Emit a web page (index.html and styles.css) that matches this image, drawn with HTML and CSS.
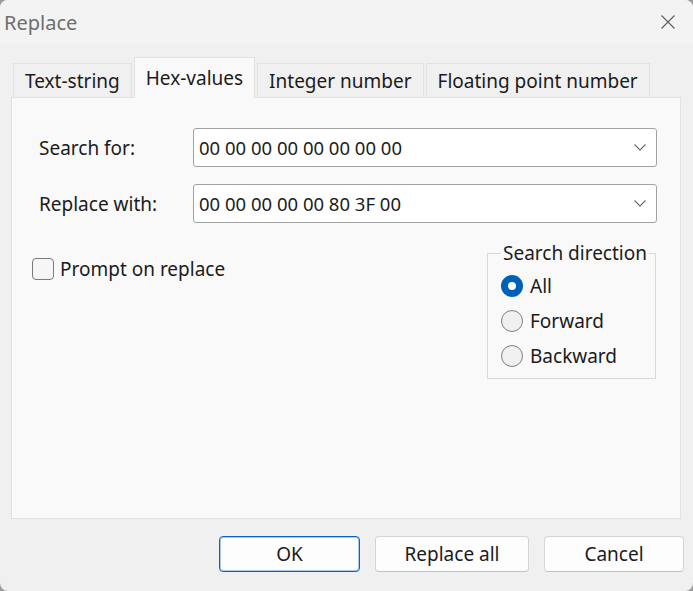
FILE: index.html
```html
<!DOCTYPE html>
<html>
<head>
  <meta charset="UTF-8">
  <title>Replace</title>
  <link rel="stylesheet" href="styles.css">
</head>
<body>
  <div class="window">
    <div class="titlebar">
      <span class="titlebar__title">Replace</span>
      <svg class="titlebar__close" width="16" height="16" viewBox="0 0 16 16">
        <path d="M1.5 1.5 L14.5 14.5 M14.5 1.5 L1.5 14.5" stroke="#5c5c5c" stroke-width="1.1" fill="none"/>
      </svg>
    </div>

    <div class="dialog">
      <div class="tabs">
        <div class="tab">Text-string</div>
        <div class="tab tab--active">Hex-values</div>
        <div class="tab">Integer number</div>
        <div class="tab">Floating point number</div>
      </div>

      <div class="panel">
        <div class="field">
          <label class="field__label">Search for:</label>
          <div class="combo">
            <span class="combo__value">00 00 00 00 00 00 00 00</span>
            <svg class="combo__arrow" width="12" height="7" viewBox="0 0 12 7">
              <path d="M0.5 0.5 L6 6 L11.5 0.5" stroke="#6a6a6a" stroke-width="1.1" fill="none"/>
            </svg>
          </div>
        </div>
        <div class="field">
          <label class="field__label">Replace with:</label>
          <div class="combo">
            <span class="combo__value">00 00 00 00 00 80 3F 00</span>
            <svg class="combo__arrow" width="12" height="7" viewBox="0 0 12 7">
              <path d="M0.5 0.5 L6 6 L11.5 0.5" stroke="#6a6a6a" stroke-width="1.1" fill="none"/>
            </svg>
          </div>
        </div>

        <div class="options">
          <label class="check"><span class="check__box"></span>Prompt on replace</label>

          <fieldset class="group">
            <legend class="group__title">Search direction</legend>
            <label class="radio"><span class="radio__circle radio__circle--on"></span>All</label>
            <label class="radio"><span class="radio__circle"></span>Forward</label>
            <label class="radio"><span class="radio__circle"></span>Backward</label>
          </fieldset>
        </div>
      </div>

      <div class="buttons">
        <button class="btn btn--default btn--ok">OK</button>
        <button class="btn btn--replace">Replace all</button>
        <button class="btn btn--cancel">Cancel</button>
      </div>
    </div>
  </div>
</body>
</html>
```

FILE: styles.css
```css
/* Replace dialog */
html {
  background-color: #9c9c9c;
}

body {
  margin: 0;
  font-family: "Noto Sans", "Open Sans", sans-serif;
  font-size: 19px;
  color: #1b1b1b;
}

.window {
  width: 693px;
  height: 591px;
  background-color: #f0f0f0;
  border-radius: 8px;
  overflow: hidden;
}

.titlebar {
  height: 44px;
  padding: 0 17px 0 4px;
  display: flex;
  align-items: center;
  justify-content: space-between;
  background-color: #f3f3f3;
}

.titlebar__title {
  font-size: 20px;
  color: #6e6e6e;
}

.dialog {
  padding: 13px 0 0 11px;
}

/* Tabs */
.tabs {
  display: flex;
  align-items: flex-end;
  gap: 2px;
  padding-left: 2px;
  margin-bottom: -1px;
  position: relative;
  z-index: 1;
}

.tab {
  height: 34px;
  padding: 0 11px;
  display: flex;
  align-items: center;
  border: 1px solid #e2e2e2;
  border-bottom: none;
  margin-bottom: 1px;
  background-color: #f0f0f0;
  box-sizing: border-box;
}

.tab--active {
  height: 41px;
  margin-bottom: 0;
  background-color: #f9f9f9;
}

.panel {
  width: 670px;
  height: 422px;
  padding: 30px 23px 0 20px;
  border: 1px solid #e2e2e2;
  background-color: #f9f9f9;
  box-sizing: border-box;
}

/* Form rows */
.field {
  display: flex;
  align-items: center;
  padding-left: 7px;
  margin-bottom: 17px;
}

.field__label {
  width: 154px;
  flex-shrink: 0;
}

.combo {
  flex: 1;
  height: 39px;
  padding: 0 10px 0 5px;
  display: flex;
  align-items: center;
  justify-content: space-between;
  background-color: #fff;
  border: 1px solid #a2a2a2;
  border-radius: 3px;
  box-sizing: border-box;
}

.combo__value {
  font-size: 18.5px;
}

.options {
  display: flex;
  justify-content: space-between;
  align-items: flex-start;
  margin-top: 18px;
}

.check {
  display: flex;
  align-items: center;
  gap: 6px;
  margin-top: 17px;
  line-height: 22px;
}

.check__box {
  width: 22px;
  height: 22px;
  border: 1px solid #7a7a7a;
  border-radius: 4px;
  background-color: #f6f6f6;
  box-sizing: border-box;
}

/* Group box */
.group {
  width: 169px;
  margin: 0 1px 0 0;
  padding: 3px 0 5px 13px;
  border: 1px solid #d9d9d9;
  box-sizing: border-box;
}

.group__title {
  padding: 0 2px;
  line-height: 24px;
  white-space: nowrap;
}

.radio {
  height: 35px;
  display: flex;
  align-items: center;
  gap: 7px;
}

.radio__circle {
  width: 22px;
  height: 22px;
  border: 1px solid #7f7f7f;
  border-radius: 50%;
  background-color: #f0f0f0;
  box-sizing: border-box;
}

.radio__circle--on {
  border: 7px solid #005fb8;
  background-color: #fff;
}

/* Buttons */
.buttons {
  display: flex;
  justify-content: flex-end;
  gap: 15px;
  margin-top: 17px;
  padding-right: 9px;
}

.btn {
  height: 36px;
  font-family: inherit;
  font-size: 19px;
  color: #1b1b1b;
  background-color: #fdfdfd;
  border: 1px solid #d4d4d4;
  border-bottom-color: #c2c2c2;
  border-radius: 4px;
}

.btn--default {
  border: 1px solid #0a64bd;
  box-shadow: inset 0 0 0 1px rgba(10, 100, 189, 0.35);
}

.btn--ok {
  width: 141px;
}

.btn--replace {
  width: 154px;
}

.btn--cancel {
  width: 140px;
}
```
